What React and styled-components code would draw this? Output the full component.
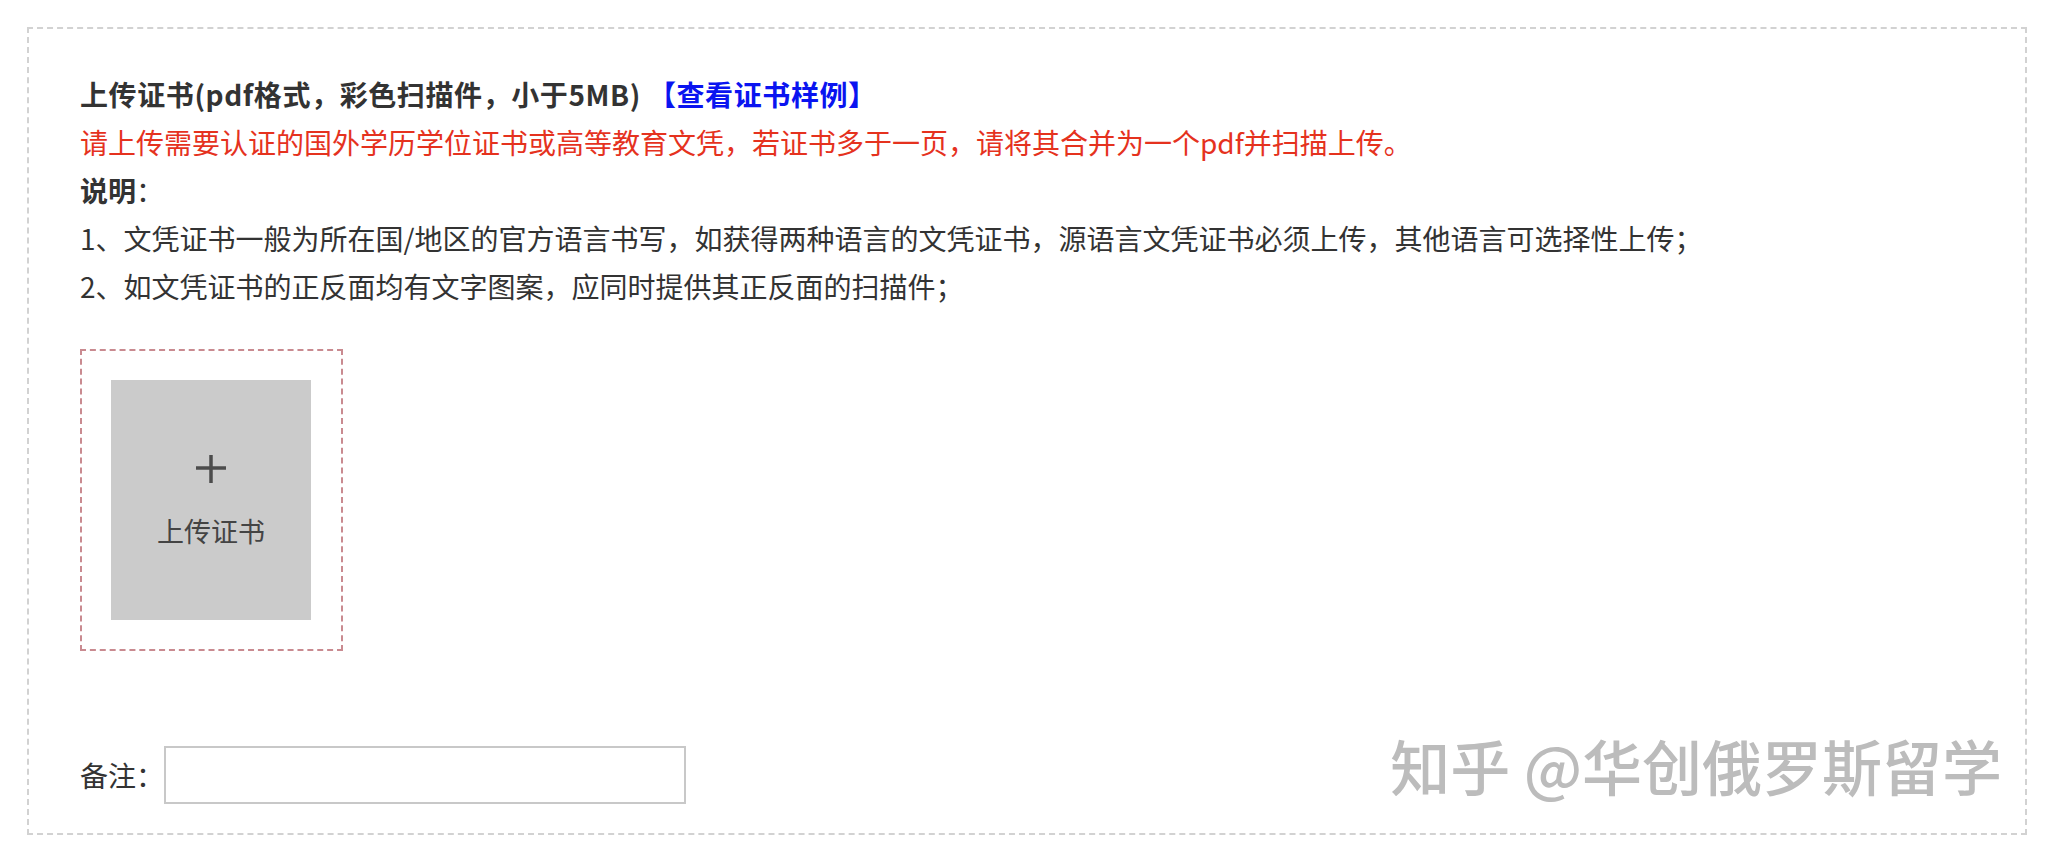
import React from 'react';
import styled, { createGlobalStyle } from 'styled-components';

const GlobalStyle = createGlobalStyle`
  html, body {
    margin: 0;
    padding: 0;
    background: #ffffff;
  }
  body {
    font-family: "Noto Sans CJK SC", "Noto Sans", sans-serif;
    color: #333333;
  }
`;

const Page = styled.div`
  padding: 27px 30px 14px 27px;
`;

const Panel = styled.section`
  position: relative;
  box-sizing: border-box;
  width: 2000px;
  height: 808px;
  border: 2px dashed #d2d2d2;
  padding: 41px 0 0 51px;
  font-size: 28px;
  line-height: 48px;
`;

const Line = styled.p`
  margin: 0;
  white-space: nowrap;
  color: ${(p) => (p.$tone === 'red' ? '#e5321e' : '#333333')};
  font-weight: ${(p) => (p.$bold ? 700 : 400)};
  letter-spacing: ${(p) => (p.$bold ? '0.6px' : '0')};
`;

const Strong = styled.strong`
  font-weight: 700;
`;

const SampleLink = styled.a`
  color: #0a14f0;
  font-weight: 700;
  text-decoration: none;
  cursor: pointer;
`;

const UploadFrame = styled.div`
  box-sizing: border-box;
  width: 263px;
  height: 302px;
  margin-top: 39px;
  border: 2px dashed #c98a90;
  padding: 29px 30px 29px 29px;
`;

const UploadTile = styled.button`
  box-sizing: border-box;
  width: 200px;
  height: 240px;
  border: none;
  padding: 0;
  margin: 0;
  background: #cbcbcb;
  display: flex;
  flex-direction: column;
  align-items: center;
  justify-content: center;
  gap: 34px;
  cursor: pointer;
  font-family: inherit;
`;

const PlusIcon = styled.svg`
  display: block;
  width: 32px;
  height: 28px;
  color: #4c4c4c;
`;

const TileLabel = styled.span`
  font-size: 27px;
  line-height: 28px;
  color: #444444;
`;

const RemarkRow = styled.div`
  display: flex;
  align-items: center;
  margin-top: 95px;
`;

const RemarkLabel = styled.label`
  font-size: 28px;
  line-height: 48px;
  color: #333333;
  white-space: nowrap;
`;

const RemarkInput = styled.input`
  box-sizing: border-box;
  width: 522px;
  height: 58px;
  border: 2px solid #c8c8c8;
  outline: none;
  padding: 0 10px;
  font-size: 24px;
  font-family: inherit;
  background: #fff;
`;

const Watermark = styled.div`
  position: absolute;
  right: 23px;
  bottom: 38px;
  font-size: 60px;
  line-height: 60px;
  font-weight: 500;
  color: #bcbcbc;
  white-space: nowrap;
  text-shadow: 1px 1px 0 rgba(255, 255, 255, 0.9);
  pointer-events: none;
`;

export default function App() {
  return (
    <>
      <GlobalStyle />
      <Page>
        <Panel>
          <Line $bold>
            上传证书(pdf格式，彩色扫描件，小于5MB) <SampleLink>【查看证书样例】</SampleLink>
          </Line>
          <Line $tone="red">
            请上传需要认证的国外学历学位证书或高等教育文凭，若证书多于一页，请将其合并为一个pdf并扫描上传。
          </Line>
          <Line>
            <Strong>说明</Strong>：
          </Line>
          <Line>
            1、文凭证书一般为所在国/地区的官方语言书写，如获得两种语言的文凭证书，源语言文凭证书必须上传，其他语言可选择性上传；
          </Line>
          <Line>2、如文凭证书的正反面均有文字图案，应同时提供其正反面的扫描件；</Line>

          <UploadFrame>
            <UploadTile type="button">
              <PlusIcon viewBox="0 0 32 28" aria-hidden="true">
                <line x1="1" y1="13" x2="31" y2="13" stroke="currentColor" strokeWidth="3.5" />
                <line x1="16" y1="0" x2="16" y2="28" stroke="currentColor" strokeWidth="3.5" />
              </PlusIcon>
              <TileLabel>上传证书</TileLabel>
            </UploadTile>
          </UploadFrame>

          <RemarkRow>
            <RemarkLabel htmlFor="remark">备注：</RemarkLabel>
            <RemarkInput id="remark" type="text" />
          </RemarkRow>

          <Watermark>知乎 @华创俄罗斯留学</Watermark>
        </Panel>
      </Page>
    </>
  );
}
